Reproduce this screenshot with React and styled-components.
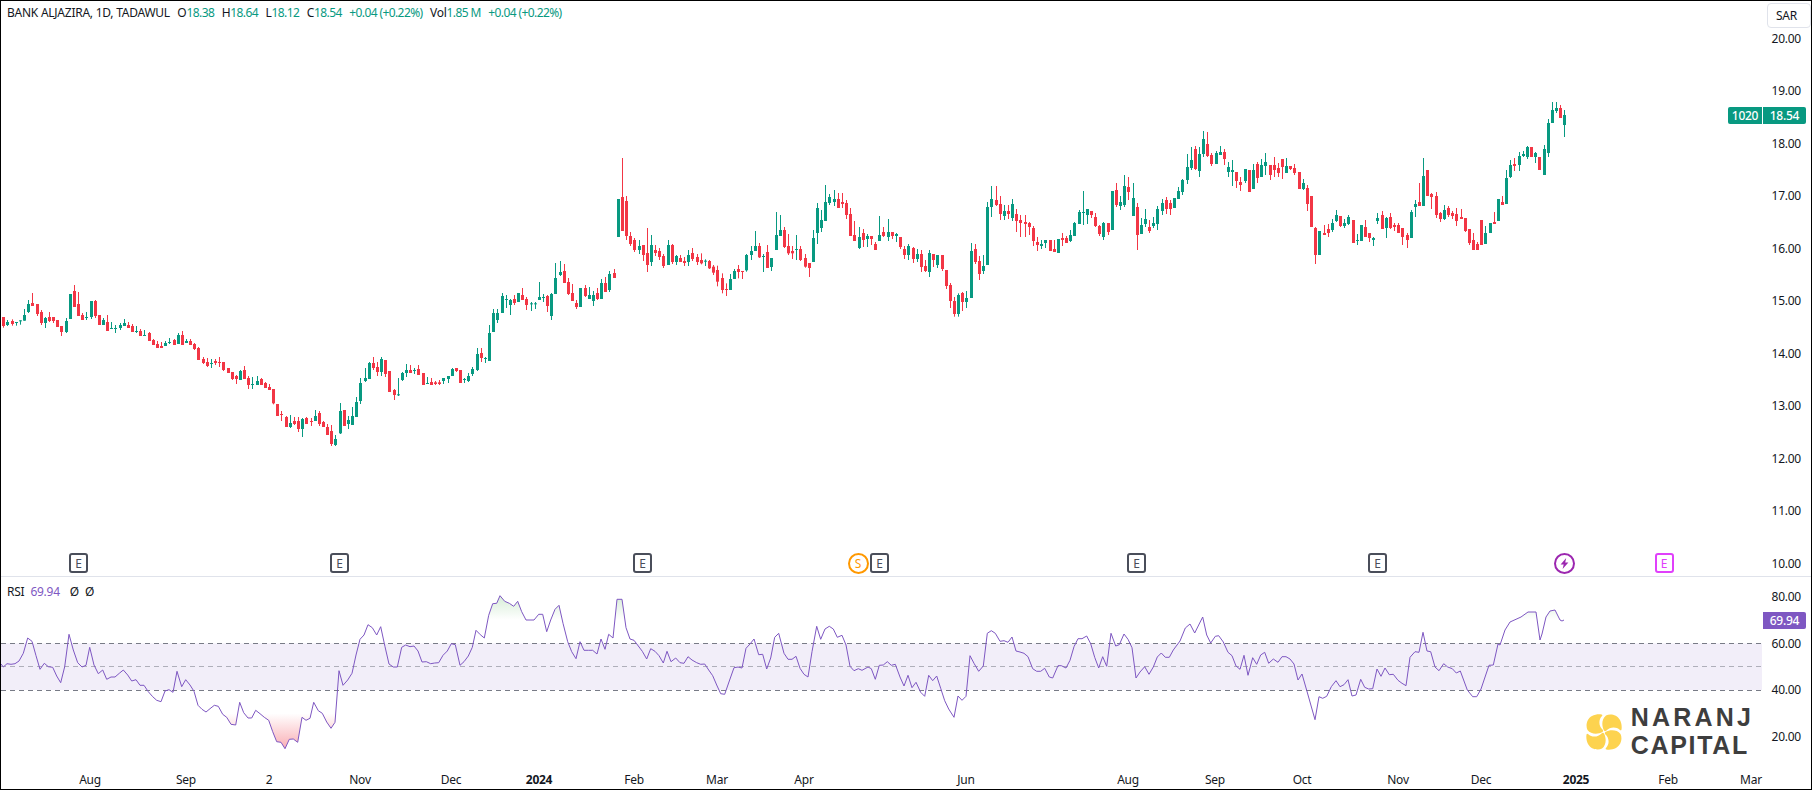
import React from "react";
import styled, { createGlobalStyle } from "styled-components";

const UP = "#089981";
const DOWN = "#F23645";
const RSI_COLOR = "#7E57C2";

// candle rows: [up, bodyTop, bodyBottom, wickTop, wickBottom], read off the chart per section
const sectionA = [
  [0,141,168,141,173],[1,156,165,150,168],[0,153,162,148,167],[1,156,158,156,167],[1,151,153,151,164],[1,135,152,117,152],[1,102,126,90,129],[0,99,108,69,108],[0,102,132,102,138],[0,126,159,120,165],
  [1,144,159,141,174],[0,141,153,126,156],[0,141,153,141,159],[0,150,171,150,171],[0,168,186,168,198],[1,153,186,144,189],[1,72,147,72,147],[0,63,111,45,111],[0,102,138,66,138],[0,135,150,129,150],
  [1,141,144,126,150],[1,93,141,93,147],[0,93,138,90,144],[0,135,165,135,165],[1,150,165,144,165],[0,156,183,135,183],[1,174,177,156,177],[1,174,177,165,189],[1,165,174,159,180],[1,159,168,147,168],
  [0,165,174,156,174],[0,168,186,162,186],[1,183,186,168,189],[0,183,198,177,198],[1,195,198,180,198],[0,189,213,186,213],[0,210,225,207,225],[0,222,234,213,234],[0,228,234,216,234],[1,219,228,213,228],
  [1,216,219,204,222],[0,210,225,207,225],[1,195,222,189,222],[0,195,225,183,225],[1,213,219,207,219],[0,213,225,207,225],[0,222,237,219,240],[0,234,270,231,270],[0,267,279,261,282],[0,276,288,264,291],
  [1,279,281,267,294],[0,273,279,267,285],[0,276,278,261,291],[0,276,300,276,303],[0,294,309,294,309],[0,306,327,306,330],[0,318,327,315,342],[1,303,330,300,330],[0,300,327,288,327],[0,324,345,318,357],
  [1,342,344,321,357],[1,333,345,318,345],[0,327,345,324,345],[0,339,354,336,354],[0,351,360,342,360],[0,357,400,357,403],[0,402,438,402,438],[0,432,435,423,453],[0,441,471,438,471],[1,459,471,435,474],
  [0,453,462,441,465],[0,453,477,441,486],[1,447,477,444,501],[0,444,462,441,462],[0,453,455,444,468],[1,438,453,420,453],[0,429,462,423,468],[0,456,471,453,471],[0,471,495,462,495],[0,483,522,465,528],
  [1,507,525,495,528],[1,423,490,399,492],[0,420,468,420,468],[1,450,462,438,477],
];

const sectionB = [
  [1,498,525,471,525],[1,456,501,441,501],[1,399,453,384,462],[1,384,393,354,396],[1,339,387,336,387],[0,339,354,321,360],[0,351,366,336,378],[1,327,366,321,378],[0,330,372,330,381],[0,363,426,363,426],
  [0,420,435,417,450],[1,433,436,384,438],[1,369,390,366,393],[1,360,369,342,381],[0,360,369,345,369],[1,360,363,354,372],[0,357,375,345,375],[0,369,405,369,405],[1,399,402,381,402],[0,396,405,384,405],
  [0,397,402,393,405],[0,397,402,390,405],[1,384,393,384,402],[1,378,387,378,399],[1,357,378,354,378],[0,354,363,354,366],[0,360,399,360,399],[1,387,390,384,399],[1,378,393,369,396],[1,357,372,351,378],
  [1,312,360,294,363],[0,309,324,294,336],[1,324,327,321,339],[1,249,333,225,333],[1,189,246,177,246],[1,189,210,177,219],[1,138,189,129,189],[1,147,150,135,174],[1,150,165,147,195],[0,147,159,135,165],
  [1,129,156,129,156],[0,135,150,114,150],[0,147,165,141,180],[1,160,162,156,183],[1,160,162,156,177],[1,141,150,96,150],[1,141,143,132,156],[0,138,168,135,186],[1,132,198,129,210],[1,84,132,39,132],
  [1,66,75,33,78],[0,63,99,42,99],[0,96,132,84,135],[0,129,153,102,153],[0,159,171,150,177],[1,114,171,114,171],[0,114,138,105,141],[1,135,147,111,147],[1,135,153,123,168],[0,129,147,114,150],
  [1,99,147,87,147],[0,99,126,81,126],[1,72,120,63,126],[0,69,84,57,84],
];

const sectionC = [
  [1,199,237,199,237],[0,197,231,158,231],[0,201,236,196,240],[0,236,244,232,246],[0,240,250,238,252],[1,246,250,240,254],[0,245,255,245,261],[0,253,265,228,272],[1,245,262,235,266],[0,250,253,245,256],
  [0,251,257,248,260],[0,256,266,254,268],[1,245,265,240,265],[0,245,262,244,264],[1,256,262,255,265],[0,258,262,255,262],[0,261,263,257,266],[1,255,262,250,266],[0,253,259,248,261],[0,257,262,254,265],
];

const sectionD = [
  [0,405,415,385,418],[1,407,410,403,423],[0,408,430,405,432],[0,425,443,420,450],[0,435,470,422,484],[0,459,495,445,505],[0,492,495,475,513],[1,462,495,447,495],[1,438,462,432,462],[0,432,441,420,460],
  [0,438,441,438,462],[1,390,436,387,440],[1,378,390,363,405],[1,363,378,318,378],[0,363,397,354,399],[1,393,396,387,441],[0,381,429,360,429],[1,399,426,399,438],[1,330,375,261,375],[1,315,333,270,333],
  [0,315,366,306,369],[0,363,385,327,390],[0,378,385,363,402],[1,372,375,330,405],[0,372,405,363,408],[0,399,425,387,428],[0,414,429,414,456],[1,339,411,315,411],[1,249,324,234,357],[1,285,309,255,321],
  [1,231,288,180,288],[1,216,234,207,240],[1,222,231,195,243],[0,222,249,204,249],[0,231,237,204,249],[0,234,270,225,282],[0,267,333,249,333],[0,330,348,288,348],[1,336,369,306,372],[0,324,345,312,366],
  [1,333,342,327,366],[0,333,342,333,360],[0,357,375,351,375],[1,330,348,273,348],[0,321,333,306,336],[1,321,336,282,348],[0,321,333,321,342],[1,327,333,324,351],[0,336,366,336,372],[0,372,390,363,402],
  [1,363,390,357,405],[0,369,402,366,414],[1,387,402,372,411],[0,387,426,375,441],[0,423,438,405,441],[1,384,441,375,456],[0,387,405,387,426],[1,390,420,390,429],[0,390,432,390,438],[0,435,483,435,492],
  [0,480,528,474,549],[0,528,567,516,575],[1,510,567,505,575],[0,504,531,501,558],[1,519,531,498,549],[1,378,519,354,519],[0,372,411,357,417],[0,408,447,393,465],[1,423,438,390,447],[1,246,420,231,420],
  [1,222,246,183,276],[0,225,240,183,243],[0,237,267,213,285],[1,258,273,240,285],[0,258,267,240,282],[1,237,279,222,288],[0,267,288,252,321],[0,285,294,270,336],[0,291,297,270,336],[0,294,306,291,330],
  [0,309,348,303,363],[0,351,360,336,378],[1,357,363,345,372],[1,345,354,345,369],[0,345,378,345,378],[0,372,381,345,381],[1,342,384,342,384],[0,339,345,324,363],[0,339,354,333,354],[1,330,348,315,351],
  [1,294,333,291,333],[1,261,297,255,297],[1,261,264,198,300],[1,252,270,252,297],[0,258,270,258,279],[0,276,303,264,306],[0,303,327,300,333],[1,294,336,291,345],[0,294,321,294,330],[1,198,315,198,315],
  [0,195,240,174,246],[1,231,243,213,255],[1,183,240,150,246],[0,186,201,156,225],[1,219,273,174,273],[0,246,330,234,375],[1,300,327,279,327],[1,282,297,252,306],[0,306,318,285,324],[1,294,303,276,309],
  [1,252,297,243,315],[1,234,258,222,270],[0,225,252,216,267],[0,234,252,225,270],[1,219,249,219,249],[1,198,222,186,222],[1,165,201,162,210],[1,126,165,87,177],[1,105,129,66,135],[0,72,132,63,135],
  [1,87,138,66,156],[1,42,87,18,96],[0,57,93,21,96],[0,90,117,84,123],[1,84,117,78,117],[1,81,90,63,90],[0,81,102,72,120],[1,126,141,111,156],[1,135,141,105,183],[0,141,168,141,189],
  [0,171,180,156,198],[1,132,168,132,174],[0,135,201,135,201],[1,135,192,117,192],[0,117,159,111,174],[1,120,156,102,156],[1,111,123,84,150],[0,120,150,120,165],[0,120,135,96,156],[0,129,144,114,156],
  [0,102,126,102,162],[1,123,144,99,144],[0,123,132,123,135],[0,129,144,117,150],[0,141,192,141,192],[1,174,192,162,195],[0,189,237,180,258],[0,213,306,213,306],[0,309,390,306,417],[1,318,390,318,390],
  [0,324,330,300,330],[0,312,324,297,336],[1,294,315,282,321],[1,270,288,255,291],[0,273,303,273,306],[1,294,303,282,309],[1,276,297,270,300],[0,285,354,285,354],[1,345,348,327,360],[1,300,348,300,348],
  [0,306,336,285,336],[0,324,339,324,351],[1,339,345,336,363],[1,279,288,264,297],[0,270,312,258,312],[1,279,309,276,339],[0,276,309,264,312],[0,300,306,294,318],[0,300,324,294,324],[0,309,336,309,360],
  [0,330,345,324,369],[1,261,339,255,339],[1,237,246,225,276],[0,231,243,174,243],[1,153,243,99,243],[0,135,213,135,213],[0,207,216,204,252],[0,213,270,201,279],[0,264,282,261,291],[1,255,282,240,285],
  [0,249,270,243,276],[0,264,273,258,282],[0,267,288,249,303],[0,276,282,252,282],[0,279,318,279,321],[0,312,354,312,360],[0,345,375,324,375],[0,357,375,351,375],
];

const sectionE = [
  [0,390,465,390,465],[1,429,462,408,462],[1,399,429,399,429],[0,396,402,366,402],[1,327,393,327,393],[0,336,345,318,345],[1,264,342,240,342],[1,225,261,210,264],[0,222,228,204,243],[1,198,225,186,243],
  [1,192,198,183,201],[1,171,201,168,207],[0,171,201,171,201],[1,189,201,186,219],[0,201,240,201,240],[1,177,255,165,255],[1,99,189,87,201],[1,60,99,36,99],[1,54,63,36,69],[0,54,84,45,84],[1,75,105,60,141],
];

const toPage = (rows, scale, originY) =>
  rows.map(([up, top, bottom, wickTop, wickBottom]) => ({
    up: !!up,
    top: originY + top / scale,
    bottom: originY + bottom / scale,
    wickTop: originY + wickTop / scale,
    wickBottom: originY + wickBottom / scale,
  }));

const candles = [
  ...toPage(sectionA, 3, 270),
  ...toPage(sectionB, 3, 250),
  ...toPage(sectionC, 1, 0),
  ...toPage(sectionD, 3, 125),
  ...toPage(sectionE, 3, 90),
].map((c, i) => ({ ...c, x: Math.round(3.33 + i * 4.1515) }));

// rsi trace, zoomed x/y pairs per screen third
const rsiLeft = [3,372,10,381,21,371,33,373,45,371,57,363,70,340,83,294,96,304,108,347,120,388,133,370,145,380,158,382,170,408,182,428,194,380,207,283,220,330,233,368,246,381,258,376,269,322,282,375,295,401,308,390,320,418,333,411,345,411,358,400,370,390,383,405,395,423,408,419,420,436,432,436,445,455,458,470,470,481,483,485,495,453,507,449,519,457,531,394,545,440,557,419,570,435,582,454,594,496,606,508,618,516,630,506,643,496,655,499,668,523,680,532,693,553,707,555,719,487,731,518,744,534,755,534,767,511,780,521,793,532,806,541,818,575,830,605,843,607,855,626,868,598,880,597,893,607,906,532,918,541,930,535,941,487,955,512,967,520,980,546,993,565,1005,547,1017,392,1029,436,1043,420,1056,400,1068,345,1080,298,1092,285,1104,254,1117,263,1130,285,1142,260,1155,320,1167,372,1180,381,1192,381,1205,322,1217,315,1230,320,1242,318,1254,333,1266,366,1279,365,1292,371,1304,369,1316,368,1329,346,1342,333,1354,311,1366,314,1380,376,1392,365,1405,348,1417,322,1428,271,1441,284,1453,294,1466,226,1478,191,1490,190];
const rsiMiddle = [0,167,14,184,28,190,41,199,53,184,65,215,78,240,90,240,102,240,116,223,128,223,140,275,152,240,165,208,177,196,189,250,203,305,215,335,228,356,240,305,252,331,265,331,278,331,291,342,303,297,315,328,326,283,339,294,351,178,366,178,378,263,390,297,402,301,415,318,427,334,440,357,452,326,465,334,477,347,490,369,501,334,513,365,527,354,540,368,552,370,564,350,576,360,590,368,602,373,614,372,626,390,638,407,650,435,662,461,674,463,688,423,702,383,714,381,726,384,738,325,750,312,762,297,776,344,788,343,800,387,812,354,824,292,836,280,852,340,864,358,876,358,888,349,900,385,912,403,924,411,936,335,950,259,962,298,975,267,988,259,1000,267,1012,292,1026,286,1038,315,1050,379,1062,392,1075,386,1086,391,1104,381,1114,386,1126,418,1138,376,1150,375,1162,365,1174,376,1186,373,1200,411,1212,438,1224,406,1236,443,1248,427,1262,457,1274,469,1286,406,1298,422,1310,408,1322,445,1334,482,1346,507,1362,532,1374,468,1386,481,1398,469,1410,347,1422,370,1436,394,1450,378,1462,280,1474,272,1486,280];
const rsiRight = [0,304,12,302,24,307,36,291,48,333,60,336,72,340,84,350,98,386,110,394,122,394,134,385,148,411,158,414,174,377,184,377,198,384,210,361,222,320,234,296,246,296,260,288,272,311,284,352,296,384,308,350,320,379,333,280,347,318,358,314,372,282,384,298,396,323,408,414,420,396,434,380,447,403,460,381,472,351,484,339,496,352,508,352,520,330,540,303,556,264,570,252,584,279,608,231,620,285,632,309,646,289,656,287,670,306,684,337,696,347,708,378,720,388,732,346,744,406,758,353,770,373,782,345,794,337,806,370,820,357,834,367,846,350,858,350,870,357,882,372,894,420,906,402,920,451,945,539,957,470,968,475,980,469,994,440,1008,422,1020,440,1032,434,1044,419,1056,468,1068,465,1082,418,1094,442,1106,447,1118,446,1131,387,1143,409,1155,384,1168,404,1180,403,1194,421,1206,430,1218,437,1230,352,1245,335,1257,337,1269,277,1281,333,1292,335,1305,381,1317,392,1331,371,1343,381,1357,386,1369,399,1381,393,1402,450,1418,470,1430,470,1443,447,1467,376,1480,375,1494,312];
const rsiTail = [[1500,645],[1505,630],[1510,622],[1521,617],[1528,612],[1536,612],[1540,640],[1542,634],[1546,617],[1550,611],[1555,610],[1560,620],[1562,621],[1564,620]];

const fromZoom = (flat, offsetX) => {
  const out = [];
  for (let i = 0; i < flat.length; i += 2) {
    out.push([offsetX + flat[i] / 3, 540 + flat[i + 1] / 3]);
  }
  return out;
};

const rsiPoints = [
  ...fromZoom(rsiLeft, 0),
  ...fromZoom(rsiMiddle, 500),
  ...fromZoom(rsiRight, 1000),
  ...rsiTail,
];
const rsiLine = rsiPoints.map(([x, y]) => `${x.toFixed(1)},${y.toFixed(1)}`).join(" ");
const startX = rsiPoints[0][0];
const endX = rsiPoints[rsiPoints.length - 1][0];

const LEVEL_70 = 620;
const LEVEL_30 = 713.5;

const priceTicks = ["20.00", "19.00", "18.00", "17.00", "16.00", "15.00", "14.00", "13.00", "12.00", "11.00", "10.00"];
const rsiTicks = ["80.00", "60.00", "40.00", "20.00"];

const timeLabels = [
  { x: 90, text: "Aug" }, { x: 186, text: "Sep" }, { x: 269, text: "2" }, { x: 360, text: "Nov" },
  { x: 451, text: "Dec" }, { x: 539, text: "2024", year: true }, { x: 634, text: "Feb" }, { x: 717, text: "Mar" },
  { x: 804, text: "Apr" }, { x: 966, text: "Jun" }, { x: 1128, text: "Aug" }, { x: 1215, text: "Sep" },
  { x: 1302, text: "Oct" }, { x: 1398, text: "Nov" }, { x: 1481, text: "Dec" }, { x: 1576, text: "2025", year: true },
  { x: 1668, text: "Feb" }, { x: 1751, text: "Mar" },
];

const earnings = [78.5, 339.5, 642.5, 879.5, 1136.5, 1377.5];

const Candles = () => (
  <ChartSvg viewBox="1 1 1761 575">
    {candles.map((c, i) => (
      <g key={i} fill={c.up ? UP : DOWN}>
        <rect x={c.x} y={c.wickTop} width="1" height={c.wickBottom - c.wickTop} />
        <rect x={c.x - 1} y={c.top} width="3" height={Math.max(c.bottom - c.top, 1)} />
      </g>
    ))}
  </ChartSvg>
);

const RsiChart = () => {
  const area = `${rsiLine} ${endX},LEVEL ${startX},LEVEL`;
  return (
    <ChartSvg viewBox="1 577 1761 188">
      <defs>
        <linearGradient id="obFill" gradientUnits="userSpaceOnUse" x1="0" y1="590" x2="0" y2={LEVEL_70}>
          <stop offset="0" stopColor="#4CAF50" stopOpacity="0.28" />
          <stop offset="1" stopColor="#4CAF50" stopOpacity="0" />
        </linearGradient>
        <linearGradient id="osFill" gradientUnits="userSpaceOnUse" x1="0" y1={LEVEL_30} x2="0" y2="750">
          <stop offset="0" stopColor={DOWN} stopOpacity="0" />
          <stop offset="1" stopColor={DOWN} stopOpacity="0.42" />
        </linearGradient>
        <clipPath id="obClip">
          <rect x="0" y="577" width="1762" height={LEVEL_70 - 577} />
        </clipPath>
        <clipPath id="osClip">
          <rect x="0" y={LEVEL_30} width="1762" height="60" />
        </clipPath>
      </defs>
      <rect x="1" y="643.5" width="1761" height="46.5" fill={RSI_COLOR} fillOpacity="0.1" />
      <polygon points={area.replaceAll("LEVEL", LEVEL_70)} fill="url(#obFill)" clipPath="url(#obClip)" />
      <polygon points={area.replaceAll("LEVEL", LEVEL_30)} fill="url(#osFill)" clipPath="url(#osClip)" />
      <line x1="1" x2="1762" y1="643.5" y2="643.5" stroke="#787B86" strokeDasharray="5 4" />
      <line x1="1" x2="1762" y1="666.5" y2="666.5" stroke="#787B86" strokeOpacity="0.55" strokeDasharray="5 4" />
      <line x1="1" x2="1762" y1="690.5" y2="690.5" stroke="#787B86" strokeDasharray="5 4" />
      <polyline points={rsiLine} fill="none" stroke={RSI_COLOR} strokeWidth="1" strokeLinejoin="round" />
    </ChartSvg>
  );
};

const LogoMark = () => (
  <LogoIcon viewBox="0 0 36 36">
    {[0, 90, 180, 270].map((angle) => (
      <path
        key={angle}
        transform={`rotate(${angle} 18 18)`}
        d="M18 16.5 C15.5 12 15.5 5 20 1.5 C24 -0.5 31 0.5 34 6 C35.5 9 36 12.5 35.5 15.5 C35.3 16.6 34.3 16.6 33.7 15.8 C30.5 12.5 24 12.5 20.5 16.5 C19.6 17.4 18.6 17.4 18 16.5 Z"
      />
    ))}
  </LogoIcon>
);

const App = () => {
  return (
    <>
      <GlobalStyle />
      <Frame>
        <PaneRow $height={575} $divided>
          <ChartArea>
            <Candles />
            <Legend>
              <LegendItem>BANK ALJAZIRA, 1D, TADAWUL</LegendItem>
              <LegendItem>O<Value>18.38</Value></LegendItem>
              <LegendItem>H<Value>18.64</Value></LegendItem>
              <LegendItem>L<Value>18.12</Value></LegendItem>
              <LegendItem>C<Value>18.54</Value></LegendItem>
              <Value>+0.04 (+0.22%)</Value>
              <LegendItem>Vol<Value>1.85 M</Value></LegendItem>
              <Value>+0.04 (+0.22%)</Value>
            </Legend>
            {earnings.map((x) => (
              <EventBadge key={x} style={{ left: x }}>E</EventBadge>
            ))}
            <EventBadge $pink style={{ left: 1664 }}>E</EventBadge>
            <EventCircle $color="#FF9800" style={{ left: 858 }}>S</EventCircle>
            <EventCircle $color="#9C27B0" style={{ left: 1564 }}>
              <svg width="13" height="13" viewBox="0 0 13 13">
                <path d="M8.2 1 L2.6 7.4 H5.7 L4.6 12 L10.4 5.5 H7.2 Z" fill="#9C27B0" />
              </svg>
            </EventCircle>
            <SymbolTag>1020</SymbolTag>
          </ChartArea>
          <Axis>
            <CurrencyBox>SAR</CurrencyBox>
            <TickList $offset={11.5}>
              {priceTicks.map((t) => (
                <Tick key={t} $step={52.55}>{t}</Tick>
              ))}
            </TickList>
            <PriceTag $top={106} $bg={UP}>18.54</PriceTag>
          </Axis>
        </PaneRow>
        <PaneRow $height={188}>
          <ChartArea>
            <RsiChart />
            <RsiLegend>
              <span>RSI</span>
              <RsiValue>69.94</RsiValue>
              <span>Ø</span>
              <span>Ø</span>
            </RsiLegend>
            <Logo>
              <LogoMark />
              <LogoText>
                <LogoLine>NARANJ</LogoLine>
                <LogoLine $tight>CAPITAL</LogoLine>
              </LogoText>
            </Logo>
          </ChartArea>
          <Axis>
            <TickList $offset={-3.2}>
              {rsiTicks.map((t) => (
                <Tick key={t} $step={46.7}>{t}</Tick>
              ))}
            </TickList>
            <PriceTag $top={35} $bg={RSI_COLOR}>69.94</PriceTag>
          </Axis>
        </PaneRow>
        <TimeAxis>
          {timeLabels.map((t) => (
            <TimeLabel key={`${t.text}-${t.x}`} $year={t.year} style={{ left: t.x - 1 }}>
              {t.text}
            </TimeLabel>
          ))}
        </TimeAxis>
      </Frame>
    </>
  );
};

export default App;

const GlobalStyle = createGlobalStyle`
  html, body {
    margin: 0;
    padding: 0;
    background: #fff;
    overflow: hidden;
  }
  * {
    box-sizing: border-box;
  }
`;

const Frame = styled.div`
  width: 1812px;
  height: 790px;
  border: 1px solid #000;
  background: #fff;
  display: flex;
  flex-direction: column;
  font-family: "Noto Sans", "Open Sans", sans-serif;
  font-size: 12px;
  letter-spacing: -0.25px;
  color: #131722;
  overflow: hidden;
`;

const PaneRow = styled.div`
  display: flex;
  height: ${({ $height, $divided }) => $height + ($divided ? 1 : 0)}px;
  flex-shrink: 0;
  border-bottom: ${({ $divided }) => ($divided ? "1px solid #E0E3EB" : "none")};
`;

const ChartArea = styled.div`
  position: relative;
  width: 1761px;
  flex-shrink: 0;
`;

const ChartSvg = styled.svg`
  display: block;
  width: 100%;
  height: 100%;
`;

const Legend = styled.div`
  position: absolute;
  top: 3px;
  left: 6px;
  display: flex;
  gap: 7.5px;
  line-height: 17px;
  white-space: nowrap;
`;

const LegendItem = styled.span`
  color: #131722;
`;

const Value = styled.span`
  color: ${UP};
  letter-spacing: -0.6px;
`;

const EventBadge = styled.div`
  position: absolute;
  top: 552px;
  width: 19px;
  height: 20px;
  margin-left: -10.5px;
  display: flex;
  align-items: center;
  justify-content: center;
  border: 2px solid ${({ $pink }) => ($pink ? "#E040FB" : "#4A4E5A")};
  border-radius: 3px;
  background: #fff;
  color: ${({ $pink }) => ($pink ? "#E040FB" : "#4A4E5A")};
  font-size: 12px;
`;

const EventCircle = styled.div`
  position: absolute;
  top: 552px;
  width: 21px;
  height: 21px;
  margin-left: -11.5px;
  display: flex;
  align-items: center;
  justify-content: center;
  border: 2px solid ${({ $color }) => $color};
  border-radius: 50%;
  background: #fff;
  color: ${({ $color }) => $color};
  font-size: 12px;
`;

const SymbolTag = styled.div`
  position: absolute;
  top: 106px;
  right: 0;
  width: 34px;
  height: 17px;
  display: flex;
  align-items: center;
  justify-content: center;
  background: ${UP};
  border-radius: 2px 0 0 2px;
  color: #fff;
  font-size: 12px;
  font-weight: 500;
`;

const Axis = styled.div`
  position: relative;
  flex: 1;
`;

const CurrencyBox = styled.div`
  position: absolute;
  top: 2px;
  right: 0;
  width: 44px;
  height: 25px;
  padding-left: 8px;
  display: flex;
  align-items: center;
  border: 1px solid #E0E3EB;
  border-radius: 4px;
  background: #fff;
`;

const TickList = styled.div`
  display: flex;
  flex-direction: column;
  margin-top: ${({ $offset }) => $offset}px;
`;

const Tick = styled.div`
  height: ${({ $step }) => $step}px;
  flex-shrink: 0;
  line-height: ${({ $step }) => $step}px;
  padding-right: 10px;
  text-align: right;
`;

const PriceTag = styled.div`
  position: absolute;
  top: ${({ $top }) => $top}px;
  left: 1px;
  width: 43px;
  height: 17px;
  display: flex;
  align-items: center;
  justify-content: center;
  background: ${({ $bg }) => $bg};
  border-radius: 0 2px 2px 0;
  color: #fff;
  font-size: 12px;
  font-weight: 500;
`;

const RsiLegend = styled.div`
  position: absolute;
  top: 6px;
  left: 6px;
  display: flex;
  gap: 6px;
  line-height: 17px;
`;

const RsiValue = styled.span`
  color: ${RSI_COLOR};
  margin-right: 4px;
`;

const Logo = styled.div`
  position: absolute;
  right: 8px;
  bottom: 7px;
  display: flex;
  align-items: center;
  gap: 9px;
`;

const LogoIcon = styled.svg`
  width: 36px;
  height: 36px;
  fill: #FDD34F;
`;

const LogoText = styled.div`
  display: flex;
  flex-direction: column;
  gap: 3px;
  font-family: "Liberation Sans", Arial, sans-serif;
  font-weight: 700;
  color: #3E3E3E;
`;

const LogoLine = styled.div`
  font-size: 25px;
  line-height: 25px;
  letter-spacing: ${({ $tight }) => ($tight ? "1.7px" : "3.2px")};
`;

const TimeAxis = styled.div`
  position: relative;
  flex: 1;
`;

const TimeLabel = styled.span`
  position: absolute;
  top: 6px;
  transform: translateX(-50%);
  line-height: 17px;
  font-weight: ${({ $year }) => ($year ? 700 : 400)};
`;
